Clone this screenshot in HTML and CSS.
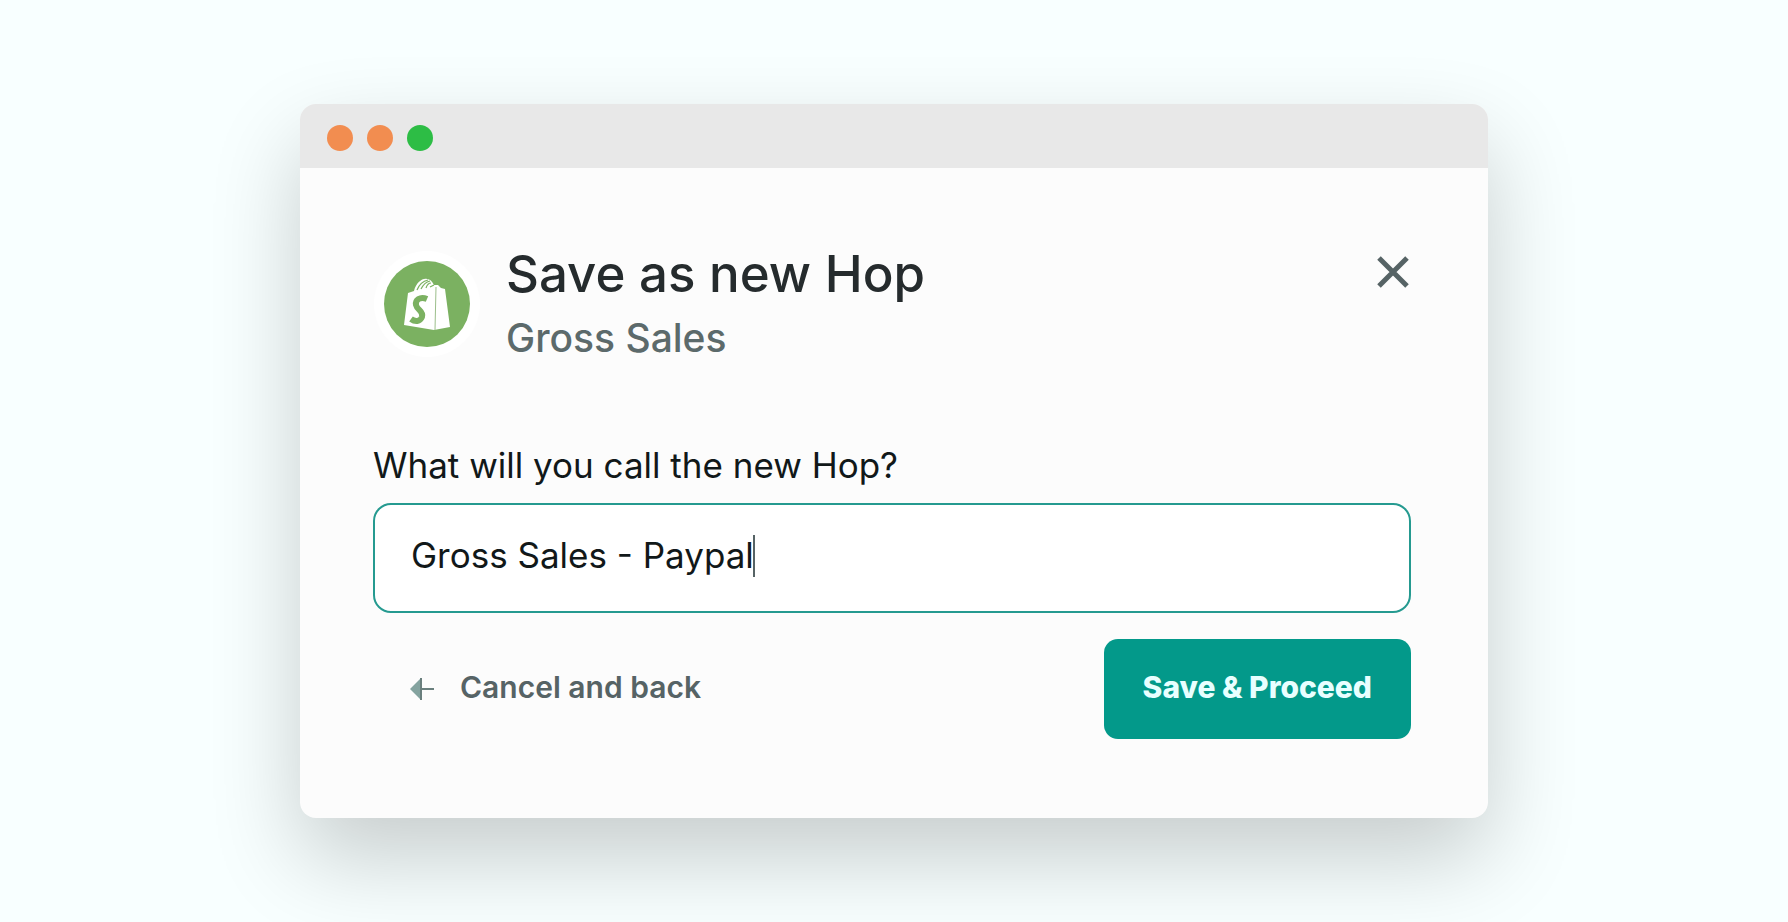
FILE: index.html
```html
<!DOCTYPE html>
<html lang="en">
<head>
    <meta charset="UTF-8">
    <meta name="viewport" content="width=device-width, initial-scale=1.0">
    <title>Save as new Hop</title>
    <link rel="stylesheet" href="styles.css">
</head>
<body>
    <main class="window">
        <div class="titlebar">
            <span class="dot"></span>
            <span class="dot"></span>
            <span class="dot dot-green"></span>
        </div>
        <form class="content">
            <header class="heading">
                <svg class="logo" viewBox="0 0 106 106" aria-hidden="true">
                    <circle cx="53" cy="53" r="53" fill="#fff"/>
                    <circle cx="53" cy="53" r="43" fill="#7bb161"/>
                    <path d="M34 42 L40 40 C42 32 48 27 53 28 C56 28 58 30 60 34 L64 34 L67 37 L71 38 L76 76 L60 79 L30 74 Z" fill="#fff"/>
                    <path d="M43 39 C45 34 49 30 54 29 M47 38 C49 34 52 31 56 30 M52 37 C53 34 55 32 57 32 M56 36 L60 34" fill="none" stroke="#7bb161" stroke-width="1.2"/>
                    <path d="M62 36 L61 79" stroke="#9cbf8b" stroke-width="1"/>
                    <path d="M53 48 C46 45 41 49 42 54 C43 59 50 60 48 66 C46 71 41 71 37 68" fill="none" stroke="#7bb161" stroke-width="6"/>
                </svg>
                <div class="titles">
                    <h1>Save as new Hop</h1>
                    <p>Gross Sales</p>
                </div>
                <button class="close" type="button" aria-label="Close">
                    <svg viewBox="0 0 32 32" width="32" height="32">
                        <path d="M2 2 L30 30 M30 2 L2 30" stroke="#566365" stroke-width="5"/>
                    </svg>
                </button>
            </header>

            <label for="hopName">What will you call the new Hop?</label>
            <div class="field">
                <input type="text" id="hopName" value="Gross Sales - Paypal">
                <span class="caret"></span>
            </div>

            <div class="actions">
                <button class="cancel" type="button">
                    <svg viewBox="0 0 24 22" width="24" height="22" aria-hidden="true">
                        <path d="M0 11 L11 0 V22 Z" fill="#84a39f"/>
                        <path d="M11 0 V22 M11 11 H24" stroke="#6a7f7d" stroke-width="2"/>
                    </svg>
                    Cancel and back
                </button>
                <button class="save" type="submit">Save &amp; Proceed</button>
            </div>
        </form>
    </main>
</body>
</html>
```

FILE: styles.css
```css
* {
    box-sizing: border-box;
}
body {
    margin: 0;
    min-height: 100vh;
    display: flex;
    align-items: center;
    justify-content: center;
    background-color: #f8ffff;
    font-family: Inter, "Liberation Sans", sans-serif;
    color: #111819;
}
.window {
    width: 100%;
    max-width: 1188px;
    border-radius: 16px;
    background-color: #fcfcfc;
    box-shadow: 0 40px 90px rgba(0, 0, 0, 0.2);
}
.titlebar {
    display: flex;
    align-items: center;
    gap: 14px;
    height: 64px;
    padding: 4px 27px 0;
    border-radius: 16px 16px 0 0;
    background-color: #e8e8e8;
}
.dot {
    width: 26px;
    height: 26px;
    border-radius: 50%;
    background-color: #f28d50;
}
.dot-green {
    background-color: #2dbd45;
}
.content {
    padding: 76px 77px 79px 73px;
}
.heading {
    display: flex;
    align-items: flex-start;
    margin-bottom: 75px;
}
.logo {
    width: 106px;
    height: 106px;
    margin: 7px 26px 0 1px;
}
.titles {
    flex: 1;
}
h1 {
    margin: 0;
    font-size: 51px;
    font-weight: 500;
    line-height: 60px;
    color: #252b2d;
}
.titles p {
    margin: 4px 0 0;
    font-size: 39px;
    font-weight: 500;
    line-height: 60px;
    color: #5c6a6b;
}
.close {
    display: flex;
    margin: 12px 2px 0 0;
    padding: 0;
    border: none;
    background: none;
    cursor: pointer;
}
label {
    display: block;
    margin-bottom: 16px;
    font-size: 35px;
    font-weight: 400;
    line-height: 44px;
}
.field {
    position: relative;
}
.field input {
    display: block;
    width: 100%;
    height: 110px;
    padding: 0 36px 6px;
    border: 2px solid #259a90;
    border-radius: 18px;
    outline: none;
    background-color: #fff;
    font-family: inherit;
    font-size: 35px;
    font-weight: 400;
    color: inherit;
}
.caret {
    position: absolute;
    top: 32px;
    left: 380px;
    width: 2px;
    height: 42px;
    background-color: #566365;
}
.actions {
    display: flex;
    align-items: center;
    justify-content: space-between;
    margin-top: 26px;
}
.actions button {
    height: 100px;
    padding: 0 39px 4px;
    border: none;
    border-radius: 14px;
    font-family: inherit;
    font-size: 30px;
    cursor: pointer;
}
.actions .cancel {
    display: flex;
    align-items: center;
    gap: 26px;
    padding-left: 37px;
    background: none;
    font-weight: 600;
    color: #566365;
}
.cancel svg {
    margin-top: 4px;
}
.actions .save {
    background-color: #03998a;
    font-weight: 800;
    color: #e8ffff;
}
```
